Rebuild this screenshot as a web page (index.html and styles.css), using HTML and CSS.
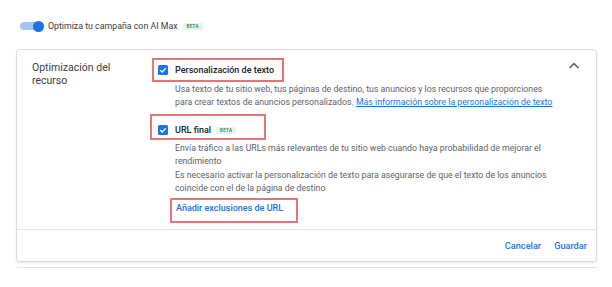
FILE: index.html
```html
<!DOCTYPE html>
<html lang="es">

<head>
    <meta charset="UTF-8">
    <meta name="viewport" content="width=device-width, initial-scale=1.0">
    <title>Optimización del recurso</title>
    <link rel="stylesheet" href="styles.css">
</head>

<body>

    <!-- AI Max toggle -->

    <div class="toggle-row">
        <span class="switch"><span class="knob"></span></span>
        <span class="toggle-label">Optimiza tu campaña con AI Max</span>
        <span class="badge">BETA</span>
    </div>

    <!-- asset optimization card -->

    <section class="card">
        <div class="card-body">
            <h2 class="card-title">Optimización del recurso</h2>

            <div class="options">
                <div class="option">
                    <label class="mark mark-text">
                        <svg class="check" viewBox="0 0 10 10">
                            <rect width="10" height="10" rx="1.5" fill="#1a73e8" />
                            <path d="M2.2 5.1 L4.1 7 L7.9 3.1" fill="none" stroke="#fff" stroke-width="1.3" />
                        </svg>
                        <span class="option-name">Personalización de texto</span>
                    </label>
                    <p class="desc">Usa texto de tu sitio web, tus páginas de destino, tus anuncios y los recursos que proporciones<br>
                        para crear textos de anuncios personalizados. <a href="#">Más información sobre la personalización de texto</a></p>
                </div>

                <div class="option">
                    <label class="mark mark-url">
                        <svg class="check" viewBox="0 0 10 10">
                            <rect width="10" height="10" rx="1.5" fill="#1a73e8" />
                            <path d="M2.2 5.1 L4.1 7 L7.9 3.1" fill="none" stroke="#fff" stroke-width="1.3" />
                        </svg>
                        <span class="option-name">URL final</span>
                        <span class="badge">BETA</span>
                    </label>
                    <p class="desc">Envía tráfico a las URLs más relevantes de tu sitio web cuando haya probabilidad de mejorar el<br>
                        rendimiento</p>
                    <p class="desc desc-note">Es necesario activar la personalización de texto para asegurarse de que el texto de los anuncios<br>
                        coincide con el de la página de destino</p>
                    <a class="mark mark-link" href="#">Añadir exclusiones de URL</a>
                </div>
            </div>

            <button class="collapse">
                <svg viewBox="0 0 16 16">
                    <path d="M3.5 10 L8 5.6 L12.5 10" fill="none" stroke="#5f6368" stroke-width="1.6" />
                </svg>
            </button>
        </div>

        <div class="card-actions">
            <button class="text-btn">Cancelar</button>
            <button class="text-btn">Guardar</button>
        </div>
    </section>

    <div class="next-line"></div>

</body>

</html>
```

FILE: styles.css
```css
* {
    margin: 0;
    padding: 0;
    box-sizing: border-box;
}

body {
    background-color: #fff;
    font-family: Roboto, "Liberation Sans", sans-serif;
    color: #3c4043;
    padding-top: 20px;
}

/* toggle row */

.toggle-row {
    display: flex;
    align-items: center;
    height: 12px;
    padding-left: 20px;
}

.switch {
    position: relative;
    display: inline-block;
    width: 21px;
    height: 8px;
    border-radius: 4px;
    background-color: #a6c5f7;
}

.switch .knob {
    position: absolute;
    right: -3px;
    top: -1.5px;
    width: 11px;
    height: 11px;
    border-radius: 50%;
    background-color: #1a73e8;
}

.toggle-label {
    margin-left: 7px;
    font-size: 8.8px;
    color: #3c4043;
}

.badge {
    display: inline-block;
    margin-left: 5px;
    padding: 1px 4px;
    font-size: 4.5px;
    line-height: 5px;
    letter-spacing: 0.3px;
    font-weight: 500;
    color: #188038;
    background-color: #e6f4ea;
    border-radius: 1px;
}

/* card */

.card {
    margin: 17px 15px 0 16px;
    width: 581px;
    border: 1px solid #dadce0;
    border-radius: 4px;
    box-shadow: 0 1px 2px rgba(60, 64, 67, 0.12);
}

.card-body {
    display: grid;
    grid-template-columns: 126px 1fr auto;
    padding: 8px 14px 6px 15px;
}

.card-title {
    margin-top: 3px;
    font-size: 10.5px;
    font-weight: 400;
    line-height: 13px;
    color: #3c4043;
    width: 80px;
}

.options {
    display: flex;
    flex-direction: column;
    align-items: flex-start;
}

.mark {
    display: inline-flex;
    align-items: center;
    border: 2px solid #e27676;
    line-height: 12px;
}

.mark-text {
    margin-left: -6px;
    padding: 4px 8px 4px 4px;
}

.mark-url {
    margin-top: 5.5px;
    margin-left: -8px;
    padding: 8px 28px 2px 6px;
}

.mark-link {
    margin-top: 3.5px;
    margin-left: 12px;
    padding: 2px 13px 7px 4px;
    font-size: 9px;
    font-weight: 500;
    color: #1a73e8;
    text-decoration: none;
}

.check {
    width: 10px;
    height: 10px;
    margin-right: 7px;
}

.option-name {
    font-size: 9px;
    font-weight: 500;
    color: #202124;
}

.option {
    display: flex;
    flex-direction: column;
    align-items: flex-start;
}

.desc {
    margin-top: 0.5px;
    padding-left: 17px;
    font-size: 8.75px;
    line-height: 13px;
    color: #5f6368;
    white-space: nowrap;
}

.mark-url + .desc {
    margin-top: 1.5px;
}

.desc-note {
    margin-top: 1px;
}

.desc a {
    color: #1a73e8;
}

.collapse {
    width: 16px;
    height: 16px;
    border: none;
    background: none;
}

.collapse svg {
    display: block;
    width: 16px;
    height: 16px;
}

/* footer buttons */

.card-actions {
    display: flex;
    justify-content: flex-end;
    align-items: center;
    gap: 13px;
    height: 32px;
    padding-right: 9px;
    border-top: 1px solid #e3e3e3;
}

.text-btn {
    border: none;
    background: none;
    font-family: Roboto, "Liberation Sans", sans-serif;
    font-size: 9.2px;
    font-weight: 500;
    color: #1a73e8;
}

.next-line {
    margin: 5px 15px 0 17px;
    width: 580px;
    border-top: 1px solid #e3e3e3;
}
```
